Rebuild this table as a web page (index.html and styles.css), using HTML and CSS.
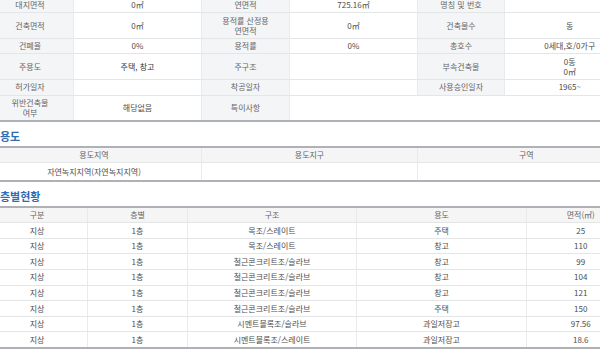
FILE: index.html
```html
<!DOCTYPE html>
<html lang="ko">
<head>
<meta charset="utf-8">
<title>건축물대장</title>
<link rel="stylesheet" href="styles.css">
</head>
<body>
<div class="page">
  <table class="grid info">
    <colgroup>
      <col class="c87"><col class="c128"><col class="c88"><col class="c128"><col class="c87"><col class="c130">
    </colgroup>
    <tbody>
      <tr>
        <th>대지면적</th><td>0㎡</td>
        <th>연면적</th><td>725.16㎡</td>
        <th>명칭 및 번호</th><td></td>
      </tr>
      <tr>
        <th>건축면적</th><td>0㎡</td>
        <th>용적률 산정용<br>연면적</th><td>0㎡</td>
        <th>건축물수</th><td>동</td>
      </tr>
      <tr>
        <th>건폐율</th><td>0%</td>
        <th>용적률</th><td>0%</td>
        <th>총호수</th><td>0세대,호/0가구</td>
      </tr>
      <tr>
        <th>주용도</th><td class="strong">주택, 창고</td>
        <th>주구조</th><td></td>
        <th>부속건축물</th><td>0동<br>0㎡</td>
      </tr>
      <tr>
        <th>허가일자</th><td></td>
        <th>착공일자</th><td></td>
        <th>사용승인일자</th><td>1965~</td>
      </tr>
      <tr>
        <th>위반건축물<br>여부</th><td>해당없음</td>
        <th>특이사항</th><td colspan="3"></td>
      </tr>
    </tbody>
  </table>

  <h2 class="section-title">용도</h2>
  <table class="grid list use">
    <colgroup>
      <col class="c215"><col class="c216"><col class="c217">
    </colgroup>
    <thead>
      <tr><th>용도지역</th><th>용도지구</th><th>구역</th></tr>
    </thead>
    <tbody>
      <tr><td>자연녹지지역(자연녹지지역)</td><td></td><td></td></tr>
    </tbody>
  </table>

  <h2 class="section-title">층별현황</h2>
  <table class="grid list floors">
    <colgroup>
      <col class="c101"><col class="c100"><col class="c169"><col class="c170"><col class="c108">
    </colgroup>
    <thead>
      <tr><th>구분</th><th>층별</th><th>구조</th><th>용도</th><th>면적(㎡)</th></tr>
    </thead>
    <tbody>
      <tr><td>지상</td><td>1층</td><td>목조/스레이트</td><td>주택</td><td>25</td></tr>
      <tr><td>지상</td><td>1층</td><td>목조/스레이트</td><td>창고</td><td>110</td></tr>
      <tr><td>지상</td><td>1층</td><td>철근콘크리트조/슬라브</td><td>창고</td><td>99</td></tr>
      <tr><td>지상</td><td>1층</td><td>철근콘크리트조/슬라브</td><td>창고</td><td>104</td></tr>
      <tr><td>지상</td><td>1층</td><td>철근콘크리트조/슬라브</td><td>창고</td><td>121</td></tr>
      <tr><td>지상</td><td>1층</td><td>철근콘크리트조/슬라브</td><td>주택</td><td>150</td></tr>
      <tr><td>지상</td><td>1층</td><td>시멘트블록조/슬라브</td><td>과일저장고</td><td>97.56</td></tr>
      <tr><td>지상</td><td>1층</td><td>시멘트블록조/스레이트</td><td>과일저장고</td><td>18.6</td></tr>
    </tbody>
  </table>
</div>
</body>
</html>
```

FILE: styles.css
```css
html, body {
  margin: 0;
  padding: 0;
  background: #ffffff;
}

body {
  overflow: hidden;
  font-family: "Noto Sans CJK KR", "Noto Sans", sans-serif;
  font-size: 8px;
  color: #555555;
}

.page {
  width: 648px;
  margin: -2.3px 0 0 -14px;
}

.grid {
  width: 648px;
  table-layout: fixed;
  border-collapse: collapse;
  border-bottom: 2px solid #aeb1b6;
}

.grid th,
.grid td {
  padding: 2.3px 2px;
  line-height: 10px;
  font-weight: normal;
  text-align: center;
  vertical-align: middle;
  border-bottom: 1px solid #e4e5e7;
  border-left: 1px solid #e9eaec;
  white-space: nowrap;
}

.info th {
  background: #f4f5f7;
  color: #666666;
}

.info td {
  background: #ffffff;
  color: #4d4d4d;
}

.info td.strong {
  color: #333333;
}

.list {
  border-top: 2px solid #aeb1b6;
}

.list thead th {
  background: #f5f5f6;
  color: #666666;
  padding-top: 2px;
  padding-bottom: 2px;
}

.list tbody td {
  color: #4d4d4d;
}

.use tbody td {
  padding-top: 3.5px;
  padding-bottom: 3.5px;
}

.section-title {
  margin: 0;
  padding: 6px 0 2px 14px;
  font-size: 11px;
  line-height: 16px;
  font-weight: bold;
  color: #2f6cb2;
}

.c87 { width: 87px; }
.c88 { width: 88px; }
.c128 { width: 128px; }
.c130 { width: 130px; }
.c215 { width: 215px; }
.c216 { width: 216px; }
.c217 { width: 217px; }
.c101 { width: 101px; }
.c100 { width: 100px; }
.c169 { width: 169px; }
.c170 { width: 170px; }
.c108 { width: 108px; }
```
